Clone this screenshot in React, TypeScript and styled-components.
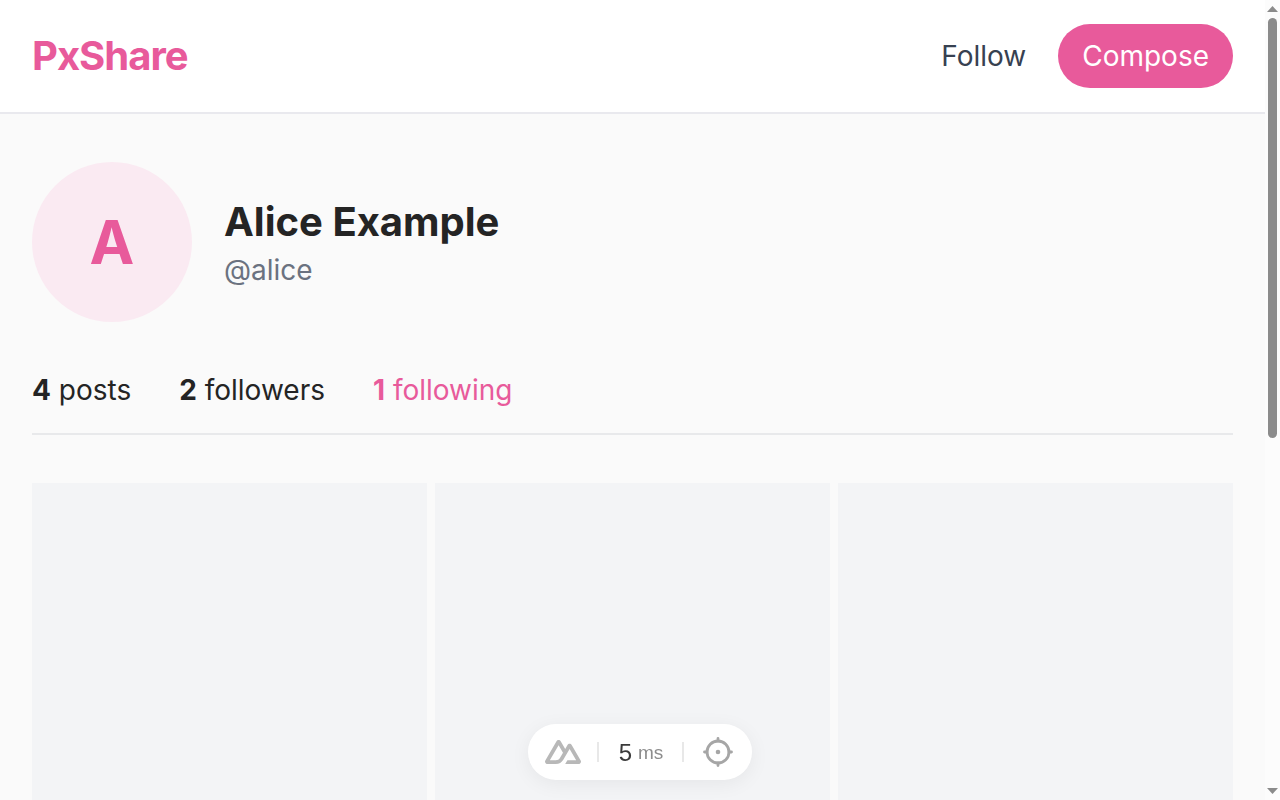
import React from "react";
import styled, { createGlobalStyle } from "styled-components";

const pink = "#e85a9b";

const GlobalStyle = createGlobalStyle`
  *, *::before, *::after { box-sizing: border-box; }
  body {
    margin: 0;
    background: #fafafa;
    color: #242424;
    font-family: Inter, sans-serif;
    font-size: 28px;
    line-height: 40px;
  }
  #root { height: 100vh; }
`;

const Shell = styled.div`
  display: flex;
  height: 100%;
  overflow: hidden;
`;

const Page = styled.div`
  flex: 1;
  min-width: 0;
  overflow: hidden;
`;

const Header = styled.header`
  display: flex;
  align-items: center;
  justify-content: space-between;
  padding: 24px 32px;
  background: #fff;
  border-bottom: 2px solid #e9e9ee;
`;

const Logo = styled.a`
  color: ${pink};
  font-size: 40px;
  font-weight: 700;
  line-height: 56px;
  letter-spacing: -1px;
  text-decoration: none;
`;

const Nav = styled.nav`
  display: flex;
  align-items: center;
  gap: 32px;
`;

const NavLink = styled.a`
  color: #374151;
  text-decoration: none;
`;

const ComposeLink = styled(NavLink)`
  padding: 12px 24px;
  border-radius: 32px;
  background: ${pink};
  color: #fff;
`;

const Main = styled.main`
  padding: 48px 32px;
`;

const Profile = styled.section`
  display: flex;
  align-items: center;
  gap: 32px;
  margin-bottom: 48px;
`;

const Avatar = styled.div`
  display: flex;
  align-items: center;
  justify-content: center;
  width: 160px;
  height: 160px;
  border-radius: 50%;
  background: #faeaf2;
  color: ${pink};
  font-size: 60px;
  font-weight: 700;
`;

const Name = styled.h1`
  margin: 0;
  font-size: 40px;
  font-weight: 700;
  line-height: 56px;
`;

const Handle = styled.p`
  margin: 0;
  color: #6b7280;
`;

const Stats = styled.div`
  display: flex;
  gap: 48px;
  padding-bottom: 23px;
  border-bottom: 2px solid #e8e9eb;
`;

const Stat = styled.a<{ $active?: boolean }>`
  color: ${(p) => (p.$active ? pink : "inherit")};
  text-decoration: none;
`;

const Grid = styled.div`
  display: grid;
  grid-template-columns: repeat(3, 1fr);
  gap: 8px;
  margin-top: 48px;
`;

const Tile = styled.a`
  aspect-ratio: 1;
  background: #f3f4f6;
`;

const Track = styled.div`
  display: flex;
  flex-direction: column;
  align-items: center;
  justify-content: space-between;
  width: 15px;
  padding: 6px 0;
  background: #fcfcfc;
`;

const Thumb = styled.div`
  width: 9px;
  height: 420px;
  margin: 6px 0 auto;
  border-radius: 5px;
  background: #8b8b8b;
`;

const Arrow = styled.svg`
  display: block;
  width: 11px;
  height: 6px;
  fill: #8b8b8b;
`;

const DevTools = styled.div`
  position: fixed;
  bottom: 20px;
  left: 50%;
  transform: translateX(-50%);
  display: flex;
  align-items: center;
  justify-content: space-between;
  width: 224px;
  height: 56px;
  padding: 0 16px 0 17px;
  border-radius: 28px;
  background: #fff;
  box-shadow: 0 4px 20px rgba(0, 0, 0, 0.06);
  font-family: "Liberation Sans", Arial, sans-serif;
`;

const ToolButton = styled.button`
  display: flex;
  padding: 0;
  border: 0;
  background: none;
  color: #a6a6a6;
`;

const Timing = styled.span`
  display: flex;
  align-items: center;
  justify-content: center;
  gap: 6px;
  width: 87px;
  padding: 1px 0 0 1px;
  border: solid #e8e8e8;
  border-width: 0 2px;
  color: #3a3a3a;
  font-size: 24px;
  line-height: 19px;
`;

const Unit = styled.span`
  color: #8c8c8c;
  font-size: 19px;
`;

const NuxtIcon = () => (
  <svg width="36" height="36" viewBox="0 0 324 324" fill="#b8b8b8" aria-hidden="true">
    <path d="M181.767 270H302.211C306.037 270 309.795 269.003 313.108 267.107C316.421 265.211 319.172 262.484 321.084 259.2C322.996 255.915 324.002 252.19 324 248.399C323.998 244.607 322.989 240.883 321.074 237.601L240.187 98.7439C238.275 95.4607 235.525 92.7342 232.213 90.8385C228.901 88.9429 225.143 87.9449 221.318 87.9449C217.494 87.9449 213.736 88.9429 210.424 90.8385C207.112 92.7342 204.361 95.4607 202.449 98.7439L181.767 134.272L141.329 64.7975C139.416 61.5145 136.664 58.7884 133.351 56.8931C130.038 54.9978 126.28 54 122.454 54C118.629 54 114.871 54.9978 111.558 56.8931C108.245 58.7884 105.493 61.5145 103.58 64.7975L2.92554 237.601C1.01067 240.883 0 244.607 0 248.399C0 252.19 1.00424 255.915 2.9162 259.2C4.82817 262.484 7.57918 265.211 10.8918 267.107C14.2045 269.003 17.9626 270 21.7884 270H97.3936C127.349 270 149.44 256.959 164.641 231.517L201.545 168.172L221.311 134.272L280.637 236.1H201.545L181.767 270ZM96.1611 236.065L43.3984 236.054L122.49 100.291L161.953 168.172L135.531 213.543C125.436 230.051 113.968 236.065 96.1611 236.065Z" />
  </svg>
);

const TargetIcon = () => (
  <svg width="36" height="36" viewBox="0 0 36 36" fill="none" stroke="currentColor" strokeWidth="2.8" strokeLinecap="round" aria-hidden="true">
    <circle cx="18" cy="18" r="11" />
    <circle cx="18" cy="18" r="2.3" fill="currentColor" stroke="none" />
    <path d="M18 4.500V7M18 29v2.500M4.500 18H7M29 18h2.500" />
  </svg>
);

const stats = [
  { count: 4, label: "posts", active: false },
  { count: 2, label: "followers", active: false },
  { count: 1, label: "following", active: true },
];

const posts = [1, 2, 3, 4];

export default function App() {
  return (
    <>
      <GlobalStyle />
      <Shell>
        <Page>
          <Header>
            <Logo href="#">PxShare</Logo>
            <Nav>
              <NavLink href="#follow">Follow</NavLink>
              <ComposeLink href="#compose">Compose</ComposeLink>
            </Nav>
          </Header>
          <Main>
            <Profile>
              <Avatar>A</Avatar>
              <div>
                <Name>Alice Example</Name>
                <Handle>@alice</Handle>
              </div>
            </Profile>
            <Stats>
              {stats.map((s) => (
                <Stat key={s.label} href={`#${s.label}`} $active={s.active}>
                  <strong>{s.count}</strong> {s.label}
                </Stat>
              ))}
            </Stats>
            <Grid>
              {posts.map((id) => (
                <Tile key={id} href={`#post-${id}`} aria-label={`Post ${id}`} />
              ))}
            </Grid>
          </Main>
        </Page>
        <Track aria-hidden="true">
          <Arrow viewBox="0 0 11 6"><path d="M5.500 0L11 6H0Z" /></Arrow>
          <Thumb />
          <Arrow viewBox="0 0 11 6"><path d="M0 0H11L5.500 6Z" /></Arrow>
        </Track>
      </Shell>
      <DevTools>
        <ToolButton type="button" aria-label="Toggle Nuxt DevTools"><NuxtIcon /></ToolButton>
        <Timing>5<Unit>ms</Unit></Timing>
        <ToolButton type="button" aria-label="Toggle component inspector"><TargetIcon /></ToolButton>
      </DevTools>
    </>
  );
}
